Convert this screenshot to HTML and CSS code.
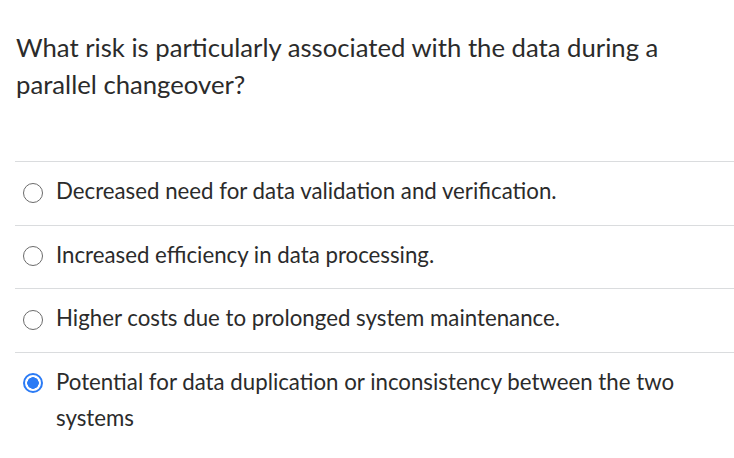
FILE: index.html
```html
<!DOCTYPE html>
<html lang="en">
<head>
<meta charset="utf-8">
<title>Question</title>
<link rel="stylesheet" href="styles.css">
</head>
<body>
<div class="quiz">
  <p class="question">What risk is particularly associated with the data during a parallel changeover?</p>
  <ul class="options">
    <li class="option"><span class="radio"></span><span class="label">Decreased need for data validation and verification.</span></li>
    <li class="option"><span class="radio"></span><span class="label">Increased efficiency in data processing.</span></li>
    <li class="option"><span class="radio"></span><span class="label">Higher costs due to prolonged system maintenance.</span></li>
    <li class="option selected"><span class="radio"></span><span class="label">Potential for data duplication or inconsistency between the two systems</span></li>
  </ul>
</div>
</body>
</html>
```
FILE: styles.css
```css
html, body {
  margin: 0;
  padding: 0;
  background: #ffffff;
}
body {
  font-family: Lato, "Open Sans", sans-serif;
  color: #2b2b2b;
}
.quiz {
  padding: 29px 0 0 16px;
}
.question {
  margin: 0;
  font-size: 25.7px;
  line-height: 37px;
  max-width: 670px;
}
.options {
  list-style: none;
  margin: 58px 0 0 -1px;
  padding: 0;
}
.option {
  display: flex;
  align-items: flex-start;
  border-top: 1px solid #dadcde;
  padding: 11px 0 15.67px 0;
  font-size: 22.25px;
  line-height: 36px;
}
.radio {
  flex: none;
  box-sizing: border-box;
  width: 20px;
  height: 20px;
  margin: 9.5px 13px 0 8px;
  border: 1.5px solid #6b6b6b;
  border-radius: 50%;
  background: #fff;
}
.selected .radio {
  border: 2px solid #2b7bf5;
  background: radial-gradient(circle, #2b7bf5 0 5.5px, #fff 6px);
}
.label {
  flex: 1;
  padding-right: 40px;
}
```
